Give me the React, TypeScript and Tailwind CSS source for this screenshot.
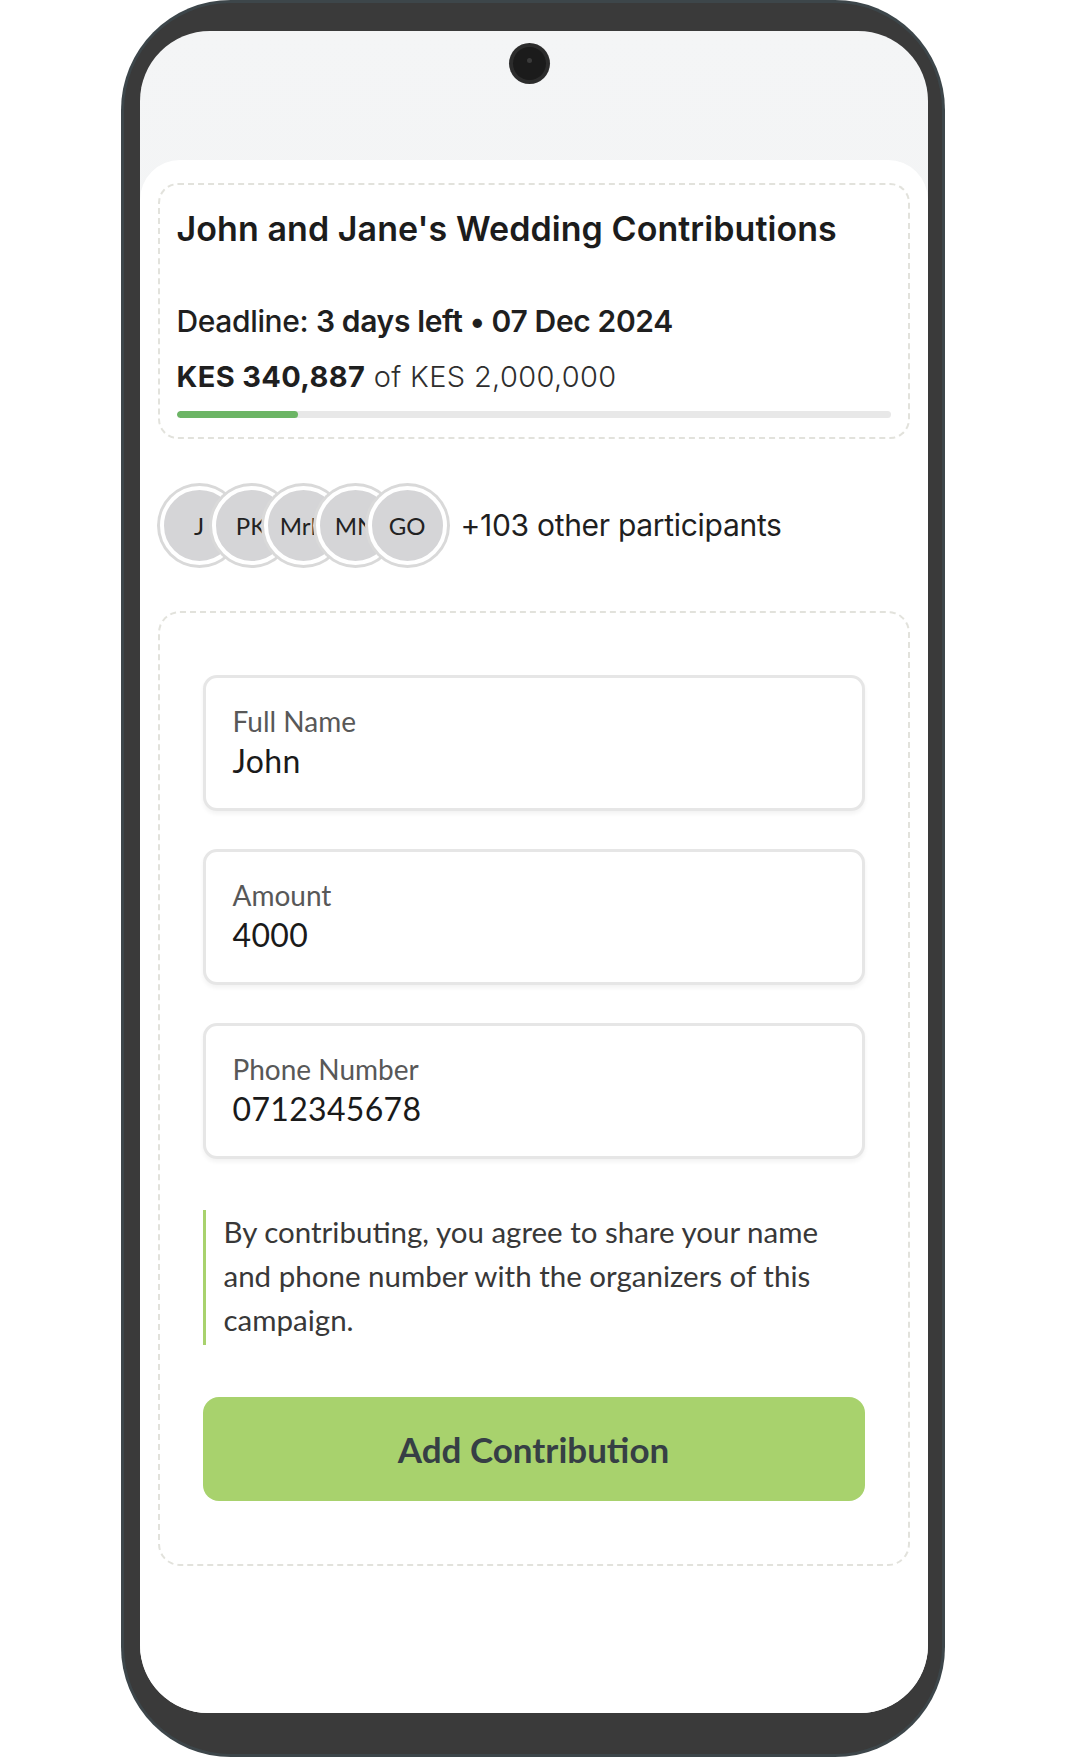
const participants = ["J", "PK", "MrK", "MN", "GO"];

const fields = [
  { label: "Full Name", value: "John" },
  { label: "Amount", value: "4000" },
  { label: "Phone Number", value: "0712345678" },
];

const inter = "font-['Inter','Liberation_Sans',sans-serif]";
const lato = "font-['Lato','Liberation_Sans',sans-serif]";

const CampaignCard = () => {
  const raised = 340887;
  const target = 2000000;
  const pct = (raised / target) * 100;

  return (
    <div className={`rounded-[20px] border-2 border-dashed border-[#e2e2dc] bg-white pl-[17px] pr-[17px] pt-[24px] pb-[19px] ${inter}`}>
      <h1 className="whitespace-nowrap text-[34px] leading-[40px] font-semibold tracking-[0.002em] text-[#1c1c1c]">
        John and Jane's Wedding Contributions
      </h1>
      <p className="mt-[54px] text-[30px] leading-[36px] tracking-[-0.012em] text-[#1f1f1f]">
        <span className="font-medium">Deadline: </span>
        <span className="font-semibold">3 days left • 07 Dec 2024</span>
      </p>
      <p className="mt-[20px] text-[29px] leading-[36px] tracking-[0.012em] text-[#1f1f1f]">
        <span className="font-bold">KES 340,887</span>
        <span className="font-light text-[#2e2e2e]"> of KES 2,000,000</span>
      </p>
      <div className="mt-[16px] h-[7px] w-full rounded-full bg-[#e8e8e8] overflow-hidden">
        <div className="h-full rounded-full bg-[#6cb565]" style={{ width: `${pct}%` }} />
      </div>
    </div>
  );
};

const Participants = () => (
  <div className="flex items-center pl-[2px]">
    <div className="flex">
      {participants.map((p, i) => (
        <div
          key={p}
          className={`relative flex h-[79px] w-[79px] shrink-0 items-center justify-center rounded-full border-[4px] border-white bg-[#d5d5d7] ring-[3px] ring-[#d9d9d9] ${i > 0 ? "-ml-[27px]" : ""} ${lato}`}
        >
          <span className="whitespace-nowrap text-[24px] text-[#222]">{p}</span>
        </div>
      ))}
    </div>
    <span className={`ml-[14px] text-[30px] tracking-[-0.01em] text-[#1f1f1f] ${inter}`}>
      +103 other participants
    </span>
  </div>
);

const Field = ({ label, value }: { label: string; value: string }) => (
  <div className="rounded-[14px] border-[3px] border-[#e6e6e6] bg-white pl-[27px] pt-[27px] pb-[27px] shadow-[0_3px_4px_rgba(0,0,0,0.05)]">
    <div className="text-[28px] leading-[32px] text-[#585858]">{label}</div>
    <div className="mt-[4px] text-[32px] leading-[40px] tracking-[0.01em] text-[#1a1a1a]">{value}</div>
  </div>
);

const ContributionForm = () => (
  <div className={`rounded-[22px] border-2 border-dashed border-[#e2e2dc] bg-white px-[43px] pt-[62px] pb-[63px] ${lato}`}>
    <div className="flex flex-col gap-[38px]">
      {fields.map((f) => (
        <Field key={f.label} label={f.label} value={f.value} />
      ))}
    </div>
    <div className="mt-[54px] border-l-[3px] border-[#a8d26d] pl-[18px] pb-[3px]">
      <p className="-mt-[3px] max-w-[620px] text-[29.5px] leading-[44px] text-[#383838]">
        By contributing, you agree to share your name and phone number with the organizers of this campaign.
      </p>
    </div>
    <button className="mt-[52px] flex h-[104px] w-full items-center justify-center rounded-[16px] bg-[#a8d26d] text-[35px] font-bold text-[#363f45]">
      Add Contribution
    </button>
  </div>
);

export default function App() {
  return (
    <div className="flex min-h-[1757px] w-full justify-center bg-white">
      <div className="h-[1757px] w-[824px] rounded-[110px] bg-[#3d464a] p-[3px]">
        <div className="h-full w-full rounded-[107px] bg-[#3a3a3a] pl-[16px] pr-[14px] pt-[28px] pb-[41px]">
          <div className="relative flex h-full w-full flex-col overflow-hidden rounded-t-[70px] rounded-b-[68px] bg-gradient-to-b from-[#f4f5f6] to-[#eef0ef]">
            <div className="h-[129px] shrink-0" />
            <div className="absolute left-[369px] top-[12px] h-[41px] w-[41px] rounded-full bg-[#2c2c2c] p-[4px]">
              <div className="relative h-full w-full rounded-full bg-[#1b1b1b]">
                <div className="absolute left-[14px] top-[11px] h-[5px] w-[5px] rounded-full bg-[#3a3a3a]" />
              </div>
            </div>
            <div className="flex flex-1 flex-col rounded-t-[40px] bg-white px-[18px] pt-[23px]">
              <CampaignCard />
              <div className="mt-[47px]">
                <Participants />
              </div>
              <div className="mt-[46px]">
                <ContributionForm />
              </div>
            </div>
          </div>
        </div>
      </div>
    </div>
  );
}
